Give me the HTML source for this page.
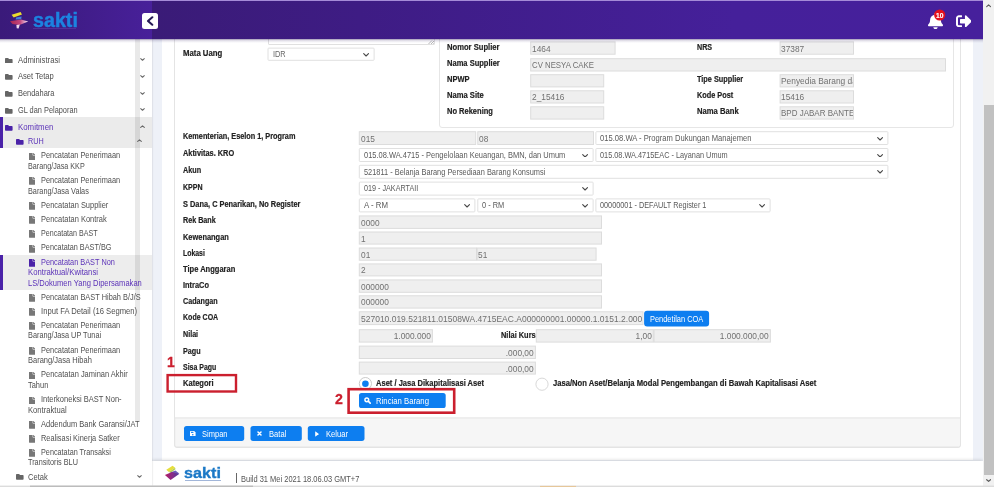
<!DOCTYPE html>
<html><head><meta charset="utf-8"><title>SAKTI</title>
<style>
html,body{margin:0;padding:0;}
body{width:994px;height:487px;overflow:hidden;position:relative;background:#fff;font-family:"Liberation Sans", sans-serif;}
.b{position:absolute;box-sizing:border-box;display:block;}
.t{position:absolute;white-space:nowrap;}
.inp{position:absolute;box-sizing:border-box;background:#efefef;border:1px solid #dedede;overflow:hidden;}
.sel{position:absolute;box-sizing:border-box;background:#fff;border:1px solid #e2e2e2;border-radius:1px;}
.clip{position:absolute;overflow:hidden;}
</style></head><body><div id="root" style="position:absolute;left:0;top:0;width:994px;height:487px;overflow:hidden;will-change:transform;">
<div class="b" style="left:152px;top:39px;width:831.00px;height:448.00px;background:#eef1f8;"></div>
<div class="b" style="left:162px;top:39px;width:811.00px;height:421.00px;background:#fff;"></div>
<div class="b" style="left:174.2px;top:30px;width:786.80px;height:417.50px;border:1px solid #e4e4e4;border-radius:0 0 3px 3px;background:#fff;"></div>
<svg class="b" style="left:170px;top:414px" width="796" height="38" viewBox="170 414 796 38"><path d="M174.700 417.900 H960.500 V445 Q960.500 447 958.500 447 H176.700 Q174.700 447 174.700 445 Z" fill="#f6f6f6" stroke="#e4e4e4" stroke-width="1"/></svg>
<div class="b" style="left:439px;top:30px;width:515.00px;height:97.50px;border:1px solid #e6e6e6;border-radius:0 0 3px 3px;background:#fff;"></div>
<svg class="b" style="left:0;top:0" width="994" height="487" viewBox="0 0 994 487"><rect x="268.00" y="48.10" width="106.10" height="12.20" rx="0.8" fill="#fff" stroke="#e0e0e0" stroke-width="1"/><rect x="530.70" y="41.90" width="84.40" height="12.30" rx="0" fill="#efefef" stroke="#dcdcdc" stroke-width="1"/><rect x="530.70" y="58.70" width="414.80" height="12.30" rx="0" fill="#efefef" stroke="#dcdcdc" stroke-width="1"/><rect x="530.70" y="74.70" width="73.00" height="12.20" rx="0" fill="#efefef" stroke="#dcdcdc" stroke-width="1"/><rect x="530.70" y="90.80" width="73.00" height="12.20" rx="0" fill="#efefef" stroke="#dcdcdc" stroke-width="1"/><rect x="530.70" y="106.80" width="73.00" height="12.30" rx="0" fill="#efefef" stroke="#dcdcdc" stroke-width="1"/><rect x="780.10" y="41.90" width="73.40" height="12.30" rx="0" fill="#efefef" stroke="#dcdcdc" stroke-width="1"/><rect x="780.10" y="74.70" width="73.40" height="12.20" rx="0" fill="#efefef" stroke="#dcdcdc" stroke-width="1"/><rect x="780.10" y="90.80" width="73.40" height="12.20" rx="0" fill="#efefef" stroke="#dcdcdc" stroke-width="1"/><rect x="780.10" y="106.80" width="73.40" height="12.30" rx="0" fill="#efefef" stroke="#dcdcdc" stroke-width="1"/><rect x="359.30" y="131.70" width="116.40" height="12.80" rx="0" fill="#efefef" stroke="#dcdcdc" stroke-width="1"/><rect x="477.80" y="131.70" width="115.70" height="12.80" rx="0" fill="#efefef" stroke="#dcdcdc" stroke-width="1"/><rect x="595.90" y="131.70" width="292.00" height="12.80" rx="0.8" fill="#fff" stroke="#e0e0e0" stroke-width="1"/><rect x="359.30" y="148.50" width="233.80" height="13.00" rx="0.8" fill="#fff" stroke="#e0e0e0" stroke-width="1"/><rect x="595.90" y="148.50" width="292.00" height="13.00" rx="0.8" fill="#fff" stroke="#e0e0e0" stroke-width="1"/><rect x="359.30" y="165.30" width="528.60" height="13.00" rx="0.8" fill="#fff" stroke="#e0e0e0" stroke-width="1"/><rect x="359.30" y="182.10" width="233.80" height="13.00" rx="0.8" fill="#fff" stroke="#e0e0e0" stroke-width="1"/><rect x="359.30" y="198.90" width="115.60" height="13.00" rx="0.8" fill="#fff" stroke="#e0e0e0" stroke-width="1"/><rect x="477.80" y="198.90" width="115.30" height="13.00" rx="0.8" fill="#fff" stroke="#e0e0e0" stroke-width="1"/><rect x="595.90" y="198.90" width="174.20" height="13.00" rx="0.8" fill="#fff" stroke="#e0e0e0" stroke-width="1"/><rect x="359.30" y="215.90" width="242.20" height="12.50" rx="0" fill="#efefef" stroke="#dcdcdc" stroke-width="1"/><rect x="359.30" y="232.00" width="242.20" height="12.10" rx="0" fill="#efefef" stroke="#dcdcdc" stroke-width="1"/><rect x="359.30" y="248.00" width="117.20" height="12.20" rx="0" fill="#efefef" stroke="#dcdcdc" stroke-width="1"/><rect x="477.10" y="248.00" width="119.00" height="12.20" rx="0" fill="#efefef" stroke="#dcdcdc" stroke-width="1"/><rect x="359.30" y="263.90" width="242.20" height="12.00" rx="0" fill="#efefef" stroke="#dcdcdc" stroke-width="1"/><rect x="359.30" y="279.90" width="242.20" height="12.40" rx="0" fill="#efefef" stroke="#dcdcdc" stroke-width="1"/><rect x="359.30" y="295.80" width="242.20" height="12.30" rx="0" fill="#efefef" stroke="#dcdcdc" stroke-width="1"/><rect x="359.30" y="311.80" width="283.70" height="12.80" rx="0" fill="#efefef" stroke="#dcdcdc" stroke-width="1"/><rect x="644.10" y="310.70" width="65.00" height="15.70" rx="3" fill="#0d7ef0"/><rect x="359.30" y="329.70" width="73.10" height="12.40" rx="0" fill="#efefef" stroke="#dcdcdc" stroke-width="1"/><rect x="536.30" y="329.70" width="117.00" height="12.40" rx="0" fill="#efefef" stroke="#dcdcdc" stroke-width="1"/><rect x="654.00" y="329.70" width="116.40" height="12.40" rx="0" fill="#efefef" stroke="#dcdcdc" stroke-width="1"/><rect x="359.30" y="346.10" width="176.10" height="12.40" rx="0" fill="#efefef" stroke="#dcdcdc" stroke-width="1"/><rect x="359.30" y="362.10" width="176.10" height="12.00" rx="0" fill="#efefef" stroke="#dcdcdc" stroke-width="1"/><rect x="359.00" y="393.10" width="86.70" height="14.90" rx="2.6" fill="#0d7ef0"/><rect x="184.00" y="426.00" width="60.20" height="14.90" rx="2.6" fill="#0d7ef0"/><rect x="250.50" y="426.00" width="51.30" height="14.90" rx="2.6" fill="#0d7ef0"/><rect x="307.80" y="426.00" width="56.70" height="14.90" rx="2.6" fill="#0d7ef0"/></svg>
<div class="b" style="left:267.5px;top:30px;width:167.20px;height:14.60px;border:1px solid #e0e0e0;background:#fff;border-radius:0 0 1px 1px;"></div>
<svg class="b" style="left:427.5px;top:39.5px" width="6.500" height="4.500" viewBox="0 0 6.500 4.500"><path d="M0.500 4 L4 0.500 M3 4 L6 1 M5.300 4 L6.200 3.100" stroke="#9a9a9a" stroke-width="0.700" fill="none"/></svg>
<div class="t" style="left:182.6px;transform-origin:0 50%;top:48.77px;font-size:8.2px;line-height:10.66px;font-weight:700;color:#222;transform:scaleX(0.9491);-webkit-text-stroke:0.18px #222;">Mata Uang</div>
<div class="t" style="left:272.7px;transform-origin:0 50%;top:49.87px;font-size:8.2px;line-height:10.66px;font-weight:400;color:#666;transform:scaleX(0.9);">IDR</div>
<svg class="b" style="left:362.90px;top:52.75px" width="6.2" height="3.91" viewBox="0 0 6.2 3.91"><path d="M0.7 0.7 L3.1 3.0100000000000002 L5.5 0.7" fill="none" stroke="#484848" stroke-width="1.12" stroke-linecap="round" stroke-linejoin="round"/></svg>
<div class="t" style="left:447px;transform-origin:0 50%;top:43.47px;font-size:8.2px;line-height:10.66px;font-weight:700;color:#222;transform:scaleX(0.9305);-webkit-text-stroke:0.18px #222;">Nomor Suplier</div>
<div class="t" style="left:447px;transform-origin:0 50%;top:59.47px;font-size:8.2px;line-height:10.66px;font-weight:700;color:#222;transform:scaleX(0.9208);-webkit-text-stroke:0.18px #222;">Nama Supplier</div>
<div class="t" style="left:447px;transform-origin:0 50%;top:75.47px;font-size:8.2px;line-height:10.66px;font-weight:700;color:#222;transform:scaleX(0.9201);-webkit-text-stroke:0.18px #222;">NPWP</div>
<div class="t" style="left:447px;transform-origin:0 50%;top:91.47px;font-size:8.2px;line-height:10.66px;font-weight:700;color:#222;transform:scaleX(0.9294);-webkit-text-stroke:0.18px #222;">Nama Site</div>
<div class="t" style="left:447px;transform-origin:0 50%;top:107.47px;font-size:8.2px;line-height:10.66px;font-weight:700;color:#222;transform:scaleX(0.9171);-webkit-text-stroke:0.18px #222;">No Rekening</div>
<div class="clip" style="left:531.2px;top:42.4px;width:83.40px;height:11.30px;"><div class="t" style="left:0.8px;transform-origin:0 50%;top:0.15px;font-size:9.3px;line-height:12px;color:#707070;transform:scaleX(0.895);">1464</div></div>
<div class="clip" style="left:531.2px;top:59.2px;width:413.80px;height:11.30px;"><div class="t" style="left:0.8px;transform-origin:0 50%;top:0.15px;font-size:9.3px;line-height:12px;color:#707070;transform:scaleX(0.84);">CV NESYA CAKE</div></div>
<div class="clip" style="left:531.2px;top:75.2px;width:72.00px;height:11.20px;"></div>
<div class="clip" style="left:531.2px;top:91.3px;width:72.00px;height:11.20px;"><div class="t" style="left:0.8px;transform-origin:0 50%;top:0.10px;font-size:9.3px;line-height:12px;color:#707070;transform:scaleX(0.895);">2_15416</div></div>
<div class="clip" style="left:531.2px;top:107.3px;width:72.00px;height:11.30px;"></div>
<div class="t" style="left:696.6px;transform-origin:0 50%;top:43.47px;font-size:8.2px;line-height:10.66px;font-weight:700;color:#222;transform:scaleX(0.873);-webkit-text-stroke:0.18px #222;">NRS</div>
<div class="t" style="left:696.6px;transform-origin:0 50%;top:75.47px;font-size:8.2px;line-height:10.66px;font-weight:700;color:#222;transform:scaleX(0.8933);-webkit-text-stroke:0.18px #222;">Tipe Supplier</div>
<div class="t" style="left:696.6px;transform-origin:0 50%;top:91.47px;font-size:8.2px;line-height:10.66px;font-weight:700;color:#222;transform:scaleX(0.8938);-webkit-text-stroke:0.18px #222;">Kode Post</div>
<div class="t" style="left:696.6px;transform-origin:0 50%;top:107.47px;font-size:8.2px;line-height:10.66px;font-weight:700;color:#222;transform:scaleX(0.9348);-webkit-text-stroke:0.18px #222;">Nama Bank</div>
<div class="clip" style="left:780.6px;top:42.4px;width:72.40px;height:11.30px;"><div class="t" style="left:0.8px;transform-origin:0 50%;top:0.15px;font-size:9.3px;line-height:12px;color:#707070;transform:scaleX(0.895);">37387</div></div>
<div class="clip" style="left:780.6px;top:75.2px;width:72.40px;height:11.20px;"><div class="t" style="left:0.8px;transform-origin:0 50%;top:0.10px;font-size:9.3px;line-height:12px;color:#707070;transform:scaleX(0.9);">Penyedia Barang dan Jasa</div></div>
<div class="clip" style="left:780.6px;top:91.3px;width:72.40px;height:11.20px;"><div class="t" style="left:0.8px;transform-origin:0 50%;top:0.10px;font-size:9.3px;line-height:12px;color:#707070;transform:scaleX(0.895);">15416</div></div>
<div class="clip" style="left:780.6px;top:107.3px;width:72.40px;height:11.30px;"><div class="t" style="left:0.8px;transform-origin:0 50%;top:0.15px;font-size:9.3px;line-height:12px;color:#707070;transform:scaleX(0.86);">BPD JABAR BANTEN</div></div>
<div class="t" style="left:182.6px;transform-origin:0 50%;top:131.97px;font-size:8.2px;line-height:10.66px;font-weight:700;color:#222;transform:scaleX(0.8917);-webkit-text-stroke:0.18px #222;">Kementerian, Eselon 1, Program</div>
<div class="t" style="left:182.6px;transform-origin:0 50%;top:149.07px;font-size:8.2px;line-height:10.66px;font-weight:700;color:#222;transform:scaleX(0.8985);-webkit-text-stroke:0.18px #222;">Aktivitas. KRO</div>
<div class="t" style="left:182.6px;transform-origin:0 50%;top:165.97px;font-size:8.2px;line-height:10.66px;font-weight:700;color:#222;transform:scaleX(0.8843);-webkit-text-stroke:0.18px #222;">Akun</div>
<div class="t" style="left:182.6px;transform-origin:0 50%;top:182.77px;font-size:8.2px;line-height:10.66px;font-weight:700;color:#222;transform:scaleX(0.8615);-webkit-text-stroke:0.18px #222;">KPPN</div>
<div class="t" style="left:182.6px;transform-origin:0 50%;top:200.37px;font-size:8.2px;line-height:10.66px;font-weight:700;color:#222;transform:scaleX(0.9021);-webkit-text-stroke:0.18px #222;">S Dana, C Penarikan, No Register</div>
<div class="t" style="left:182.6px;transform-origin:0 50%;top:216.27px;font-size:8.2px;line-height:10.66px;font-weight:700;color:#222;transform:scaleX(0.876);-webkit-text-stroke:0.18px #222;">Rek Bank</div>
<div class="t" style="left:182.6px;transform-origin:0 50%;top:232.77px;font-size:8.2px;line-height:10.66px;font-weight:700;color:#222;transform:scaleX(0.9067);-webkit-text-stroke:0.18px #222;">Kewenangan</div>
<div class="t" style="left:182.6px;transform-origin:0 50%;top:248.87px;font-size:8.2px;line-height:10.66px;font-weight:700;color:#222;transform:scaleX(0.8438);-webkit-text-stroke:0.18px #222;">Lokasi</div>
<div class="t" style="left:182.6px;transform-origin:0 50%;top:264.67px;font-size:8.2px;line-height:10.66px;font-weight:700;color:#222;transform:scaleX(0.9196);-webkit-text-stroke:0.18px #222;">Tipe Anggaran</div>
<div class="t" style="left:182.6px;transform-origin:0 50%;top:280.67px;font-size:8.2px;line-height:10.66px;font-weight:700;color:#222;transform:scaleX(0.9038);-webkit-text-stroke:0.18px #222;">IntraCo</div>
<div class="t" style="left:182.6px;transform-origin:0 50%;top:296.97px;font-size:8.2px;line-height:10.66px;font-weight:700;color:#222;transform:scaleX(0.8764);-webkit-text-stroke:0.18px #222;">Cadangan</div>
<div class="t" style="left:182.6px;transform-origin:0 50%;top:312.57px;font-size:8.2px;line-height:10.66px;font-weight:700;color:#222;transform:scaleX(0.8598);-webkit-text-stroke:0.18px #222;">Kode COA</div>
<div class="t" style="left:182.6px;transform-origin:0 50%;top:330.37px;font-size:8.2px;line-height:10.66px;font-weight:700;color:#222;transform:scaleX(0.873);-webkit-text-stroke:0.18px #222;">Nilai</div>
<div class="t" style="left:182.6px;transform-origin:0 50%;top:347.27px;font-size:8.2px;line-height:10.66px;font-weight:700;color:#222;transform:scaleX(0.8786);-webkit-text-stroke:0.18px #222;">Pagu</div>
<div class="t" style="left:182.6px;transform-origin:0 50%;top:363.07px;font-size:8.2px;line-height:10.66px;font-weight:700;color:#222;transform:scaleX(0.8508);-webkit-text-stroke:0.18px #222;">Sisa Pagu</div>
<div class="t" style="left:182.6px;transform-origin:0 50%;top:378.77px;font-size:8.2px;line-height:10.66px;font-weight:700;color:#222;transform:scaleX(0.9212);-webkit-text-stroke:0.18px #222;">Kategori</div>
<div class="clip" style="left:359.8px;top:132.2px;width:115.40px;height:11.80px;"><div class="t" style="left:0.8px;transform-origin:0 50%;top:0.40px;font-size:9.3px;line-height:12px;color:#707070;transform:scaleX(0.895);">015</div></div>
<div class="clip" style="left:478.3px;top:132.2px;width:114.70px;height:11.80px;"><div class="t" style="left:0.8px;transform-origin:0 50%;top:0.40px;font-size:9.3px;line-height:12px;color:#707070;transform:scaleX(0.895);">08</div></div>
<div class="t" style="left:600.4px;transform-origin:0 50%;top:133.87px;font-size:8.2px;line-height:10.66px;font-weight:400;color:#5a5a5a;transform:scaleX(0.929);">015.08.WA - Program Dukungan Manajemen</div>
<svg class="b" style="left:876.70px;top:136.64px" width="6.2" height="3.91" viewBox="0 0 6.2 3.91"><path d="M0.7 0.7 L3.1 3.0100000000000002 L5.5 0.7" fill="none" stroke="#484848" stroke-width="1.12" stroke-linecap="round" stroke-linejoin="round"/></svg>
<div class="t" style="left:363.8px;transform-origin:0 50%;top:150.77px;font-size:8.2px;line-height:10.66px;font-weight:400;color:#5a5a5a;transform:scaleX(0.9131);">015.08.WA.4715 - Pengelolaan Keuangan, BMN, dan Umum</div>
<svg class="b" style="left:581.90px;top:153.54px" width="6.2" height="3.91" viewBox="0 0 6.2 3.91"><path d="M0.7 0.7 L3.1 3.0100000000000002 L5.5 0.7" fill="none" stroke="#484848" stroke-width="1.12" stroke-linecap="round" stroke-linejoin="round"/></svg>
<div class="t" style="left:600.4px;transform-origin:0 50%;top:150.77px;font-size:8.2px;line-height:10.66px;font-weight:400;color:#5a5a5a;transform:scaleX(0.8955);">015.08.WA.4715EAC - Layanan Umum</div>
<svg class="b" style="left:876.70px;top:153.54px" width="6.2" height="3.91" viewBox="0 0 6.2 3.91"><path d="M0.7 0.7 L3.1 3.0100000000000002 L5.5 0.7" fill="none" stroke="#484848" stroke-width="1.12" stroke-linecap="round" stroke-linejoin="round"/></svg>
<div class="t" style="left:363.8px;transform-origin:0 50%;top:167.57px;font-size:8.2px;line-height:10.66px;font-weight:400;color:#5a5a5a;transform:scaleX(0.9039);">521811 - Belanja Barang Persediaan Barang Konsumsi</div>
<svg class="b" style="left:876.70px;top:170.34px" width="6.2" height="3.91" viewBox="0 0 6.2 3.91"><path d="M0.7 0.7 L3.1 3.0100000000000002 L5.5 0.7" fill="none" stroke="#484848" stroke-width="1.12" stroke-linecap="round" stroke-linejoin="round"/></svg>
<div class="t" style="left:363.8px;transform-origin:0 50%;top:184.37px;font-size:8.2px;line-height:10.66px;font-weight:400;color:#5a5a5a;transform:scaleX(0.88);">019 - JAKARTAII</div>
<svg class="b" style="left:581.90px;top:187.14px" width="6.2" height="3.91" viewBox="0 0 6.2 3.91"><path d="M0.7 0.7 L3.1 3.0100000000000002 L5.5 0.7" fill="none" stroke="#484848" stroke-width="1.12" stroke-linecap="round" stroke-linejoin="round"/></svg>
<div class="t" style="left:363.8px;transform-origin:0 50%;top:201.17px;font-size:8.2px;line-height:10.66px;font-weight:400;color:#5a5a5a;transform:scaleX(0.9588);">A - RM</div>
<svg class="b" style="left:463.70px;top:203.94px" width="6.2" height="3.91" viewBox="0 0 6.2 3.91"><path d="M0.7 0.7 L3.1 3.0100000000000002 L5.5 0.7" fill="none" stroke="#484848" stroke-width="1.12" stroke-linecap="round" stroke-linejoin="round"/></svg>
<div class="t" style="left:482.3px;transform-origin:0 50%;top:201.17px;font-size:8.2px;line-height:10.66px;font-weight:400;color:#5a5a5a;transform:scaleX(0.9038);">0 - RM</div>
<svg class="b" style="left:581.90px;top:203.94px" width="6.2" height="3.91" viewBox="0 0 6.2 3.91"><path d="M0.7 0.7 L3.1 3.0100000000000002 L5.5 0.7" fill="none" stroke="#484848" stroke-width="1.12" stroke-linecap="round" stroke-linejoin="round"/></svg>
<div class="t" style="left:600.4px;transform-origin:0 50%;top:201.17px;font-size:8.2px;line-height:10.66px;font-weight:400;color:#5a5a5a;transform:scaleX(0.8912);">00000001 - DEFAULT Register 1</div>
<svg class="b" style="left:758.90px;top:203.94px" width="6.2" height="3.91" viewBox="0 0 6.2 3.91"><path d="M0.7 0.7 L3.1 3.0100000000000002 L5.5 0.7" fill="none" stroke="#484848" stroke-width="1.12" stroke-linecap="round" stroke-linejoin="round"/></svg>
<div class="clip" style="left:359.8px;top:216.4px;width:241.20px;height:11.50px;"><div class="t" style="left:0.8px;transform-origin:0 50%;top:0.25px;font-size:9.3px;line-height:12px;color:#707070;transform:scaleX(0.895);">0000</div></div>
<div class="clip" style="left:359.8px;top:232.5px;width:241.20px;height:11.10px;"><div class="t" style="left:0.8px;transform-origin:0 50%;top:0.05px;font-size:9.3px;line-height:12px;color:#707070;transform:scaleX(0.895);">1</div></div>
<div class="clip" style="left:359.8px;top:248.5px;width:116.20px;height:11.20px;"><div class="t" style="left:0.8px;transform-origin:0 50%;top:0.10px;font-size:9.3px;line-height:12px;color:#707070;transform:scaleX(0.895);">01</div></div>
<div class="clip" style="left:477.6px;top:248.5px;width:118.00px;height:11.20px;"><div class="t" style="left:0.8px;transform-origin:0 50%;top:0.10px;font-size:9.3px;line-height:12px;color:#707070;transform:scaleX(0.895);">51</div></div>
<div class="clip" style="left:359.8px;top:264.4px;width:241.20px;height:11.00px;"><div class="t" style="left:0.8px;transform-origin:0 50%;top:0.00px;font-size:9.3px;line-height:12px;color:#707070;transform:scaleX(0.895);">2</div></div>
<div class="clip" style="left:359.8px;top:280.4px;width:241.20px;height:11.40px;"><div class="t" style="left:0.8px;transform-origin:0 50%;top:0.20px;font-size:9.3px;line-height:12px;color:#707070;transform:scaleX(0.895);">000000</div></div>
<div class="clip" style="left:359.8px;top:296.3px;width:241.20px;height:11.30px;"><div class="t" style="left:0.8px;transform-origin:0 50%;top:0.15px;font-size:9.3px;line-height:12px;color:#707070;transform:scaleX(0.895);">000000</div></div>
<div class="clip" style="left:359.8px;top:312.3px;width:282.7px;height:11.8px;"><div class="t" style="left:0.9px;top:1.10px;font-size:9.5px;line-height:12px;color:#707070;transform:scaleX(0.8935);transform-origin:0 50%;">527010.019.521811.01508WA.4715EAC.A000000001.00000.1.0151.2.000000</div></div>
<div class="t" style="left:649.9px;transform-origin:0 50%;top:313.50px;font-size:8.3px;line-height:10.79px;font-weight:400;color:#fff;transform:scaleX(0.8958);">Pendetilan COA</div>
<div class="clip" style="left:359.8px;top:330.2px;width:72.10px;height:11.40px;"><div class="t" style="right:0.8px;transform-origin:100% 50%;top:0.20px;font-size:9.2px;line-height:12px;color:#707070;transform:scaleX(0.91);">1.000.000</div></div>
<div class="t" style="left:500.5px;transform-origin:0 50%;top:330.67px;font-size:8.2px;line-height:10.66px;font-weight:700;color:#222;transform:scaleX(0.9076);-webkit-text-stroke:0.18px #222;">Nilai Kurs</div>
<div class="clip" style="left:536.8px;top:330.2px;width:116.00px;height:11.40px;"><div class="t" style="right:0.8px;transform-origin:100% 50%;top:0.20px;font-size:9.2px;line-height:12px;color:#707070;transform:scaleX(0.91);">1,00</div></div>
<div class="clip" style="left:654.5px;top:330.2px;width:115.40px;height:11.40px;"><div class="t" style="right:0.8px;transform-origin:100% 50%;top:0.20px;font-size:9.2px;line-height:12px;color:#707070;transform:scaleX(0.91);">1.000.000,00</div></div>
<div class="clip" style="left:359.8px;top:346.6px;width:175.10px;height:11.40px;"><div class="t" style="right:0.8px;transform-origin:100% 50%;top:0.20px;font-size:9.2px;line-height:12px;color:#707070;transform:scaleX(0.91);">.000,00</div></div>
<div class="clip" style="left:359.8px;top:362.6px;width:175.10px;height:11.00px;"><div class="t" style="right:0.8px;transform-origin:100% 50%;top:0.00px;font-size:9.2px;line-height:12px;color:#707070;transform:scaleX(0.91);">.000,00</div></div>
<svg class="b" style="left:355px;top:373px" width="20" height="20" viewBox="355 373 20 20"><circle cx="365.400" cy="383.600" r="6.100" fill="#fff" stroke="#c4c4c4" stroke-width="0.900"/><circle cx="365.400" cy="383.700" r="3.300" fill="#0d7ef0"/></svg>
<div class="t" style="left:376px;transform-origin:0 50%;top:378.87px;font-size:8.2px;line-height:10.66px;font-weight:700;color:#222;transform:scaleX(0.9221);-webkit-text-stroke:0.18px #222;">Aset / Jasa Dikapitalisasi Aset</div>
<svg class="b" style="left:532px;top:374px" width="20" height="20" viewBox="532 374 20 20"><circle cx="542" cy="384.200" r="6.100" fill="#fff" stroke="#d4d4d4" stroke-width="0.900"/></svg>
<div class="t" style="left:552.7px;transform-origin:0 50%;top:379.47px;font-size:8.2px;line-height:10.66px;font-weight:700;color:#222;transform:scaleX(0.9323);-webkit-text-stroke:0.18px #222;">Jasa/Non Aset/Belanja Modal Pengembangan di Bawah Kapitalisasi Aset</div>
<svg class="b" style="left:364px;top:397.4px" width="7" height="7" viewBox="0 0 12 12"><circle cx="4.800" cy="4.800" r="3.200" fill="none" stroke="#fff" stroke-width="2.500"/><path d="M7.600 7.600 L10.600 10.600" stroke="#fff" stroke-width="2.800" stroke-linecap="round"/></svg>
<div class="t" style="left:375.6px;transform-origin:0 50%;top:395.91px;font-size:8.3px;line-height:10.79px;font-weight:400;color:#fff;transform:scaleX(0.9342);">Rincian Barang</div>
<svg class="b" style="left:160px;top:370px" width="84" height="28" viewBox="160 370 84 28"><rect x="167.600" y="375.100" width="68.400" height="16.400" fill="none" stroke="#cb1f2e" stroke-width="2.400"/></svg>
<svg class="b" style="left:340px;top:384px" width="122" height="36" viewBox="340 384 122 36"><rect x="348.600" y="389.200" width="105.600" height="23.500" fill="none" stroke="#cb1f2e" stroke-width="2.600"/></svg>
<div class="t" style="left:166.6px;transform-origin:0 50%;top:353.41px;font-size:14.6px;line-height:18.98px;font-weight:700;color:#cb1f2e;transform:scaleX(0.95);-webkit-text-stroke:0.3px #cb1f2e;">1</div>
<div class="t" style="left:335.3px;transform-origin:0 50%;top:390.41px;font-size:14.6px;line-height:18.98px;font-weight:700;color:#cb1f2e;transform:scaleX(0.97);-webkit-text-stroke:0.3px #cb1f2e;">2</div>
<div class="t" style="left:202.1px;transform-origin:0 50%;top:429.31px;font-size:8.3px;line-height:10.79px;font-weight:400;color:#fff;transform:scaleX(0.9062);">Simpan</div>
<svg class="b" style="left:190.1px;top:430.8px" width="5.6" height="5.6" viewBox="0 0 10 10"><path fill="#fff" d="M1 0h6.500L10 2.500V9a1 1 0 0 1-1 1H1a1 1 0 0 1-1-1V1a1 1 0 0 1 1-1z"/><rect x="1.700" y="1.400" width="4.400" height="2" fill="#0d7ef0"/><circle cx="5" cy="6.700" r="1.400" fill="#0d7ef0"/></svg>
<div class="t" style="left:268.6px;transform-origin:0 50%;top:429.31px;font-size:8.3px;line-height:10.79px;font-weight:400;color:#fff;transform:scaleX(0.9143);">Batal</div>
<svg class="b" style="left:256.9px;top:431.1px" width="5" height="5" viewBox="0 0 10 10"><path d="M2 2 L8 8 M8 2 L2 8" stroke="#fff" stroke-width="3" stroke-linecap="round"/></svg>
<div class="t" style="left:325.90000000000003px;transform-origin:0 50%;top:429.31px;font-size:8.3px;line-height:10.79px;font-weight:400;color:#fff;transform:scaleX(0.9214);">Keluar</div>
<svg class="b" style="left:314.9px;top:430.6px" width="3.800" height="6" viewBox="0 0 7 10"><path d="M0.400 0.600 Q0.400 0 1 0.400 L6.600 4.600 Q7 5 6.600 5.400 L1 9.600 Q0.400 10 0.400 9.400z" fill="#fff"/></svg>
<div class="b" style="left:152px;top:460.5px;width:831.00px;height:26.50px;background:#fff;box-shadow:0 -1.500px 3.500px rgba(0,0,0,.17);"></div>
<svg class="b" style="left:164px;top:464px" width="17" height="18" viewBox="164 464 17 18">
<defs><linearGradient id="lg2" x1="0" x2="1" y1="0" y2="0"><stop offset="0" stop-color="#b31f63"/><stop offset=".5" stop-color="#8a2a86"/><stop offset="1" stop-color="#4c3a9c"/></linearGradient></defs>
<path d="M166.300 469.700 L172.600 465.700 L175.100 467.700 L168.800 472.100z" fill="#e6de3c"/>
<path d="M168.800 472.100 L175.100 467.700 L175.500 469.300 L170.600 472.700z" fill="#b4cf52"/>
<path d="M170.200 472.600 L175.400 470.600 L179.300 473.600 L175.500 475z" fill="#6b5bb9"/>
<path d="M164.900 475.100 L172 471.900 L179.100 473.900 L170.600 479.900z" fill="url(#lg2)"/>
</svg>
<div class="t" style="left:184.3px;transform-origin:0 50%;top:462.82px;font-size:15.2px;line-height:19.76px;font-weight:700;color:#1b78c6;transform:scaleX(1.0657);-webkit-text-stroke:0.35px #1b78c6;">sakti</div>
<div class="b" style="left:184.7px;top:480px;width:36.30px;height:0.90px;background:rgba(70,110,180,.5);"></div>
<div class="b" style="left:235.9px;top:473.3px;width:0.80px;height:9.70px;background:#666;"></div>
<div class="t" style="left:241px;transform-origin:0 50%;top:473.91px;font-size:8.6px;line-height:11.18px;font-weight:400;color:#555;transform:scaleX(0.8704);">Build 31 Mei 2021 18.06.03 GMT+7</div>
<div class="b" style="left:0px;top:39px;width:151.60px;height:448.00px;background:#fff;box-shadow:0.500px 0 1.500px rgba(0,0,0,.16);"></div>
<div class="b" style="left:0px;top:117.4px;width:151.60px;height:30.60px;background:#ebebeb;"></div>
<div class="b" style="left:0px;top:117.4px;width:2.60px;height:30.60px;background:#4a22a8;"></div>
<div class="b" style="left:0px;top:254.6px;width:151.60px;height:35.00px;background:#ededed;"></div>
<div class="b" style="left:0px;top:254.6px;width:2.60px;height:35.00px;background:#4a22a8;"></div>
<div class="b" style="left:135.2px;top:39px;width:4.60px;height:382.00px;background:rgba(0,0,0,.085);"></div>
<svg class="b" style="left:5.4px;top:57.54px" width="7.6" height="5.93" viewBox="0 0 512 400"><path fill="#666" d="M464 72H272l-64-64H48C21.5 8 0 29.5 0 56v288c0 26.5 21.5 48 48 48h416c26.500 0 48-21.500 48-48V120c0-26.500-21.500-48-48-48z"/></svg>
<div class="t" style="left:17.8px;transform-origin:0 50%;top:55.87px;font-size:8.2px;line-height:10.66px;font-weight:400;color:#4f4f4f;transform:scaleX(0.9418);">Administrasi</div>
<svg class="b" style="left:140.20px;top:58.23px" width="5.0" height="3.15" viewBox="0 0 5.0 3.15"><path d="M0.7 0.7 L2.5 2.25 L4.3 0.7" fill="none" stroke="#666" stroke-width="1.08" stroke-linecap="round" stroke-linejoin="round"/></svg>
<svg class="b" style="left:5.4px;top:74.14px" width="7.6" height="5.93" viewBox="0 0 512 400"><path fill="#666" d="M464 72H272l-64-64H48C21.5 8 0 29.5 0 56v288c0 26.5 21.5 48 48 48h416c26.500 0 48-21.500 48-48V120c0-26.500-21.500-48-48-48z"/></svg>
<div class="t" style="left:17.8px;transform-origin:0 50%;top:72.47px;font-size:8.2px;line-height:10.66px;font-weight:400;color:#4f4f4f;transform:scaleX(0.9287);">Aset Tetap</div>
<svg class="b" style="left:140.20px;top:74.82px" width="5.0" height="3.15" viewBox="0 0 5.0 3.15"><path d="M0.7 0.7 L2.5 2.25 L4.3 0.7" fill="none" stroke="#666" stroke-width="1.08" stroke-linecap="round" stroke-linejoin="round"/></svg>
<svg class="b" style="left:5.4px;top:90.84px" width="7.6" height="5.93" viewBox="0 0 512 400"><path fill="#666" d="M464 72H272l-64-64H48C21.5 8 0 29.5 0 56v288c0 26.5 21.5 48 48 48h416c26.500 0 48-21.500 48-48V120c0-26.500-21.500-48-48-48z"/></svg>
<div class="t" style="left:17.8px;transform-origin:0 50%;top:89.17px;font-size:8.2px;line-height:10.66px;font-weight:400;color:#4f4f4f;transform:scaleX(0.9086);">Bendahara</div>
<svg class="b" style="left:140.20px;top:91.52px" width="5.0" height="3.15" viewBox="0 0 5.0 3.15"><path d="M0.7 0.7 L2.5 2.25 L4.3 0.7" fill="none" stroke="#666" stroke-width="1.08" stroke-linecap="round" stroke-linejoin="round"/></svg>
<svg class="b" style="left:5.4px;top:107.64px" width="7.6" height="5.93" viewBox="0 0 512 400"><path fill="#666" d="M464 72H272l-64-64H48C21.5 8 0 29.5 0 56v288c0 26.5 21.5 48 48 48h416c26.500 0 48-21.500 48-48V120c0-26.500-21.500-48-48-48z"/></svg>
<div class="t" style="left:17.8px;transform-origin:0 50%;top:105.97px;font-size:8.2px;line-height:10.66px;font-weight:400;color:#4f4f4f;transform:scaleX(0.9009);">GL dan Pelaporan</div>
<svg class="b" style="left:140.20px;top:108.32px" width="5.0" height="3.15" viewBox="0 0 5.0 3.15"><path d="M0.7 0.7 L2.5 2.25 L4.3 0.7" fill="none" stroke="#666" stroke-width="1.08" stroke-linecap="round" stroke-linejoin="round"/></svg>
<svg class="b" style="left:5.4px;top:124.84px" width="7.6" height="5.93" viewBox="0 0 512 400"><path fill="#4a22a8" d="M464 72H272l-64-64H48C21.5 8 0 29.5 0 56v288c0 26.5 21.5 48 48 48h416c26.500 0 48-21.500 48-48V120c0-26.500-21.500-48-48-48z"/></svg>
<div class="t" style="left:17.8px;transform-origin:0 50%;top:123.07px;font-size:8.2px;line-height:10.66px;font-weight:400;color:#5b32b8;transform:scaleX(0.9604);">Komitmen</div>
<svg class="b" style="left:140.20px;top:125.12px" width="5.0" height="3.15" viewBox="0 0 5.0 3.15"><path d="M0.7 2.45 L2.5 0.9 L4.3 2.45" fill="none" stroke="#666" stroke-width="1.08" stroke-linecap="round" stroke-linejoin="round"/></svg>
<svg class="b" style="left:16.4px;top:138.74px" width="7.6" height="5.93" viewBox="0 0 512 400"><path fill="#4a22a8" d="M464 72H272l-64-64H48C21.5 8 0 29.5 0 56v288c0 26.5 21.5 48 48 48h416c26.500 0 48-21.500 48-48V120c0-26.500-21.500-48-48-48z"/></svg>
<div class="t" style="left:28.3px;transform-origin:0 50%;top:137.07px;font-size:8.2px;line-height:10.66px;font-weight:400;color:#5b32b8;transform:scaleX(0.8845);">RUH</div>
<svg class="b" style="left:136.80px;top:139.33px" width="5.0" height="3.15" viewBox="0 0 5.0 3.15"><path d="M0.7 2.45 L2.5 0.9 L4.3 2.45" fill="none" stroke="#666" stroke-width="1.08" stroke-linecap="round" stroke-linejoin="round"/></svg>
<svg class="b" style="left:28.9px;top:152.65px" width="6.2" height="7.70" viewBox="0 0 384 512" preserveAspectRatio="none"><path fill="#777" d="M224 136V0H24C10.700 0 0 10.700 0 24v464c0 13.300 10.700 24 24 24h336c13.300 0 24-10.700 24-24V160H248c-13.200 0-24-10.800-24-24zm160-14.100v6.100H256V0h6.100c6.400 0 12.500 2.500 17 7l97.900 98c4.500 4.500 7 10.600 7 16.900z"/></svg>
<div class="t" style="left:40.8px;transform-origin:0 50%;top:151.27px;font-size:8.2px;line-height:10.66px;font-weight:400;color:#4f4f4f;transform:scaleX(0.9014);">Pencatatan Penerimaan</div>
<div class="t" style="left:27.6px;transform-origin:0 50%;top:161.72px;font-size:8.2px;line-height:10.66px;font-weight:400;color:#4f4f4f;transform:scaleX(0.8772);">Barang/Jasa KKP</div>
<svg class="b" style="left:28.9px;top:177.45px" width="6.2" height="7.70" viewBox="0 0 384 512" preserveAspectRatio="none"><path fill="#777" d="M224 136V0H24C10.700 0 0 10.700 0 24v464c0 13.300 10.700 24 24 24h336c13.300 0 24-10.700 24-24V160H248c-13.200 0-24-10.800-24-24zm160-14.100v6.100H256V0h6.100c6.400 0 12.500 2.500 17 7l97.900 98c4.500 4.500 7 10.600 7 16.900z"/></svg>
<div class="t" style="left:40.8px;transform-origin:0 50%;top:176.07px;font-size:8.2px;line-height:10.66px;font-weight:400;color:#4f4f4f;transform:scaleX(0.9014);">Pencatatan Penerimaan</div>
<div class="t" style="left:27.6px;transform-origin:0 50%;top:186.52px;font-size:8.2px;line-height:10.66px;font-weight:400;color:#4f4f4f;transform:scaleX(0.8925);">Barang/Jasa Valas</div>
<svg class="b" style="left:28.9px;top:201.95px" width="6.2" height="7.70" viewBox="0 0 384 512" preserveAspectRatio="none"><path fill="#777" d="M224 136V0H24C10.700 0 0 10.700 0 24v464c0 13.300 10.700 24 24 24h336c13.300 0 24-10.700 24-24V160H248c-13.200 0-24-10.800-24-24zm160-14.100v6.100H256V0h6.100c6.400 0 12.500 2.500 17 7l97.900 98c4.500 4.500 7 10.600 7 16.900z"/></svg>
<div class="t" style="left:40.8px;transform-origin:0 50%;top:200.57px;font-size:8.2px;line-height:10.66px;font-weight:400;color:#4f4f4f;transform:scaleX(0.9125);">Pencatatan Supplier</div>
<svg class="b" style="left:28.9px;top:216.25px" width="6.2" height="7.70" viewBox="0 0 384 512" preserveAspectRatio="none"><path fill="#777" d="M224 136V0H24C10.700 0 0 10.700 0 24v464c0 13.300 10.700 24 24 24h336c13.300 0 24-10.700 24-24V160H248c-13.200 0-24-10.800-24-24zm160-14.100v6.100H256V0h6.100c6.400 0 12.500 2.500 17 7l97.900 98c4.500 4.500 7 10.600 7 16.900z"/></svg>
<div class="t" style="left:40.8px;transform-origin:0 50%;top:214.87px;font-size:8.2px;line-height:10.66px;font-weight:400;color:#4f4f4f;transform:scaleX(0.9135);">Pencatatan Kontrak</div>
<svg class="b" style="left:28.9px;top:230.45px" width="6.2" height="7.70" viewBox="0 0 384 512" preserveAspectRatio="none"><path fill="#777" d="M224 136V0H24C10.700 0 0 10.700 0 24v464c0 13.300 10.700 24 24 24h336c13.300 0 24-10.700 24-24V160H248c-13.200 0-24-10.800-24-24zm160-14.100v6.100H256V0h6.100c6.400 0 12.500 2.500 17 7l97.900 98c4.500 4.500 7 10.600 7 16.900z"/></svg>
<div class="t" style="left:40.8px;transform-origin:0 50%;top:229.07px;font-size:8.2px;line-height:10.66px;font-weight:400;color:#4f4f4f;transform:scaleX(0.8695);">Pencatatan BAST</div>
<svg class="b" style="left:28.9px;top:244.85px" width="6.2" height="7.70" viewBox="0 0 384 512" preserveAspectRatio="none"><path fill="#777" d="M224 136V0H24C10.700 0 0 10.700 0 24v464c0 13.300 10.700 24 24 24h336c13.300 0 24-10.700 24-24V160H248c-13.200 0-24-10.800-24-24zm160-14.100v6.100H256V0h6.100c6.400 0 12.500 2.500 17 7l97.900 98c4.500 4.500 7 10.600 7 16.900z"/></svg>
<div class="t" style="left:40.8px;transform-origin:0 50%;top:243.47px;font-size:8.2px;line-height:10.66px;font-weight:400;color:#4f4f4f;transform:scaleX(0.8889);">Pencatatan BAST/BG</div>
<svg class="b" style="left:28.9px;top:259.15px" width="6.2" height="7.70" viewBox="0 0 384 512" preserveAspectRatio="none"><path fill="#4a22a8" d="M224 136V0H24C10.700 0 0 10.700 0 24v464c0 13.300 10.700 24 24 24h336c13.300 0 24-10.700 24-24V160H248c-13.200 0-24-10.800-24-24zm160-14.100v6.100H256V0h6.100c6.400 0 12.500 2.500 17 7l97.900 98c4.500 4.500 7 10.600 7 16.900z"/></svg>
<div class="t" style="left:40.8px;transform-origin:0 50%;top:257.77px;font-size:8.2px;line-height:10.66px;font-weight:400;color:#5b32b8;transform:scaleX(0.8987);">Pencatatan BAST Non</div>
<div class="t" style="left:27.6px;transform-origin:0 50%;top:268.22px;font-size:8.2px;line-height:10.66px;font-weight:400;color:#5b32b8;transform:scaleX(0.9436);">Kontraktual/Kwitansi</div>
<div class="t" style="left:27.6px;transform-origin:0 50%;top:278.67px;font-size:8.2px;line-height:10.66px;font-weight:400;color:#5b32b8;transform:scaleX(0.925);">LS/Dokumen Yang Dipersamakan</div>
<svg class="b" style="left:28.9px;top:293.95px" width="6.2" height="7.70" viewBox="0 0 384 512" preserveAspectRatio="none"><path fill="#777" d="M224 136V0H24C10.700 0 0 10.700 0 24v464c0 13.300 10.700 24 24 24h336c13.300 0 24-10.700 24-24V160H248c-13.200 0-24-10.800-24-24zm160-14.100v6.100H256V0h6.100c6.400 0 12.500 2.500 17 7l97.900 98c4.500 4.500 7 10.600 7 16.900z"/></svg>
<div class="t" style="left:40.8px;transform-origin:0 50%;top:292.57px;font-size:8.2px;line-height:10.66px;font-weight:400;color:#4f4f4f;transform:scaleX(0.9026);">Pencatatan BAST Hibah B/J/S</div>
<svg class="b" style="left:28.9px;top:308.35px" width="6.2" height="7.70" viewBox="0 0 384 512" preserveAspectRatio="none"><path fill="#777" d="M224 136V0H24C10.700 0 0 10.700 0 24v464c0 13.300 10.700 24 24 24h336c13.300 0 24-10.700 24-24V160H248c-13.200 0-24-10.800-24-24zm160-14.100v6.100H256V0h6.100c6.400 0 12.500 2.500 17 7l97.900 98c4.500 4.500 7 10.600 7 16.900z"/></svg>
<div class="t" style="left:40.8px;transform-origin:0 50%;top:306.97px;font-size:8.2px;line-height:10.66px;font-weight:400;color:#4f4f4f;transform:scaleX(0.9343);">Input FA Detail (16 Segmen)</div>
<svg class="b" style="left:28.9px;top:322.05px" width="6.2" height="7.70" viewBox="0 0 384 512" preserveAspectRatio="none"><path fill="#777" d="M224 136V0H24C10.700 0 0 10.700 0 24v464c0 13.300 10.700 24 24 24h336c13.300 0 24-10.700 24-24V160H248c-13.200 0-24-10.800-24-24zm160-14.100v6.100H256V0h6.100c6.400 0 12.500 2.500 17 7l97.900 98c4.500 4.500 7 10.600 7 16.900z"/></svg>
<div class="t" style="left:40.8px;transform-origin:0 50%;top:320.67px;font-size:8.2px;line-height:10.66px;font-weight:400;color:#4f4f4f;transform:scaleX(0.9014);">Pencatatan Penerimaan</div>
<div class="t" style="left:27.6px;transform-origin:0 50%;top:331.12px;font-size:8.2px;line-height:10.66px;font-weight:400;color:#4f4f4f;transform:scaleX(0.8938);">Barang/Jasa UP Tunai</div>
<svg class="b" style="left:28.9px;top:347.35px" width="6.2" height="7.70" viewBox="0 0 384 512" preserveAspectRatio="none"><path fill="#777" d="M224 136V0H24C10.700 0 0 10.700 0 24v464c0 13.300 10.700 24 24 24h336c13.300 0 24-10.700 24-24V160H248c-13.200 0-24-10.800-24-24zm160-14.100v6.100H256V0h6.100c6.400 0 12.500 2.500 17 7l97.900 98c4.500 4.500 7 10.600 7 16.900z"/></svg>
<div class="t" style="left:40.8px;transform-origin:0 50%;top:345.97px;font-size:8.2px;line-height:10.66px;font-weight:400;color:#4f4f4f;transform:scaleX(0.9014);">Pencatatan Penerimaan</div>
<div class="t" style="left:27.6px;transform-origin:0 50%;top:356.42px;font-size:8.2px;line-height:10.66px;font-weight:400;color:#4f4f4f;transform:scaleX(0.9176);">Barang/Jasa Hibah</div>
<svg class="b" style="left:28.9px;top:371.75px" width="6.2" height="7.70" viewBox="0 0 384 512" preserveAspectRatio="none"><path fill="#777" d="M224 136V0H24C10.700 0 0 10.700 0 24v464c0 13.300 10.700 24 24 24h336c13.300 0 24-10.700 24-24V160H248c-13.200 0-24-10.800-24-24zm160-14.100v6.100H256V0h6.100c6.400 0 12.500 2.500 17 7l97.900 98c4.500 4.500 7 10.600 7 16.900z"/></svg>
<div class="t" style="left:40.8px;transform-origin:0 50%;top:370.37px;font-size:8.2px;line-height:10.66px;font-weight:400;color:#4f4f4f;transform:scaleX(0.9125);">Pencatatan Jaminan Akhir</div>
<div class="t" style="left:27.6px;transform-origin:0 50%;top:380.82px;font-size:8.2px;line-height:10.66px;font-weight:400;color:#4f4f4f;transform:scaleX(0.9098);">Tahun</div>
<svg class="b" style="left:28.9px;top:396.75px" width="6.2" height="7.70" viewBox="0 0 384 512" preserveAspectRatio="none"><path fill="#777" d="M224 136V0H24C10.700 0 0 10.700 0 24v464c0 13.300 10.700 24 24 24h336c13.300 0 24-10.700 24-24V160H248c-13.200 0-24-10.800-24-24zm160-14.100v6.100H256V0h6.100c6.400 0 12.500 2.500 17 7l97.900 98c4.500 4.500 7 10.600 7 16.900z"/></svg>
<div class="t" style="left:40.8px;transform-origin:0 50%;top:395.37px;font-size:8.2px;line-height:10.66px;font-weight:400;color:#4f4f4f;transform:scaleX(0.9192);">Interkoneksi BAST Non-</div>
<div class="t" style="left:27.6px;transform-origin:0 50%;top:405.82px;font-size:8.2px;line-height:10.66px;font-weight:400;color:#4f4f4f;transform:scaleX(0.9319);">Kontraktual</div>
<svg class="b" style="left:28.9px;top:421.05px" width="6.2" height="7.70" viewBox="0 0 384 512" preserveAspectRatio="none"><path fill="#777" d="M224 136V0H24C10.700 0 0 10.700 0 24v464c0 13.300 10.700 24 24 24h336c13.300 0 24-10.700 24-24V160H248c-13.200 0-24-10.800-24-24zm160-14.100v6.100H256V0h6.100c6.400 0 12.500 2.500 17 7l97.900 98c4.500 4.500 7 10.600 7 16.900z"/></svg>
<div class="t" style="left:40.8px;transform-origin:0 50%;top:419.67px;font-size:8.2px;line-height:10.66px;font-weight:400;color:#4f4f4f;transform:scaleX(0.9144);">Addendum Bank Garansi/JAT</div>
<svg class="b" style="left:28.9px;top:435.35px" width="6.2" height="7.70" viewBox="0 0 384 512" preserveAspectRatio="none"><path fill="#777" d="M224 136V0H24C10.700 0 0 10.700 0 24v464c0 13.300 10.700 24 24 24h336c13.300 0 24-10.700 24-24V160H248c-13.200 0-24-10.800-24-24zm160-14.100v6.100H256V0h6.100c6.400 0 12.500 2.500 17 7l97.900 98c4.500 4.500 7 10.600 7 16.900z"/></svg>
<div class="t" style="left:40.8px;transform-origin:0 50%;top:433.97px;font-size:8.2px;line-height:10.66px;font-weight:400;color:#4f4f4f;transform:scaleX(0.9043);">Realisasi Kinerja Satker</div>
<svg class="b" style="left:28.9px;top:449.35px" width="6.2" height="7.70" viewBox="0 0 384 512" preserveAspectRatio="none"><path fill="#777" d="M224 136V0H24C10.700 0 0 10.700 0 24v464c0 13.300 10.700 24 24 24h336c13.300 0 24-10.700 24-24V160H248c-13.200 0-24-10.800-24-24zm160-14.100v6.100H256V0h6.100c6.400 0 12.500 2.500 17 7l97.900 98c4.500 4.500 7 10.600 7 16.900z"/></svg>
<div class="t" style="left:40.8px;transform-origin:0 50%;top:447.97px;font-size:8.2px;line-height:10.66px;font-weight:400;color:#4f4f4f;transform:scaleX(0.8863);">Pencatatan Transaksi</div>
<div class="t" style="left:27.6px;transform-origin:0 50%;top:458.42px;font-size:8.2px;line-height:10.66px;font-weight:400;color:#4f4f4f;transform:scaleX(0.8891);">Transitoris BLU</div>
<svg class="b" style="left:16.4px;top:474.34px" width="7.6" height="5.93" viewBox="0 0 512 400"><path fill="#666" d="M464 72H272l-64-64H48C21.5 8 0 29.5 0 56v288c0 26.5 21.5 48 48 48h416c26.500 0 48-21.500 48-48V120c0-26.500-21.500-48-48-48z"/></svg>
<div class="t" style="left:28.3px;transform-origin:0 50%;top:472.67px;font-size:8.2px;line-height:10.66px;font-weight:400;color:#4f4f4f;transform:scaleX(0.9256);">Cetak</div>
<svg class="b" style="left:136.80px;top:475.23px" width="5.0" height="3.15" viewBox="0 0 5.0 3.15"><path d="M0.7 0.7 L2.5 2.25 L4.3 0.7" fill="none" stroke="#666" stroke-width="1.08" stroke-linecap="round" stroke-linejoin="round"/></svg>
<div class="b" style="left:0px;top:0px;width:152.40px;height:39.00px;background:linear-gradient(90deg,#3a1a7a 0%,#3f1c86 45%,#48209a 100%);"></div>
<div class="b" style="left:152.4px;top:0px;width:830.60px;height:39.00px;background:linear-gradient(90deg,#3a1b77 0%,#3e1c84 25%,#45209a 70%,#46209c 100%);"></div>
<div class="b" style="left:0px;top:39px;width:983.00px;height:4.00px;background:linear-gradient(180deg,rgba(40,20,90,.45),rgba(40,20,90,.12) 40%,rgba(40,20,90,0));"></div>
<div class="b" style="left:0px;top:0px;width:983.00px;height:1.00px;background:#a58bd8;"></div>
<div class="b" style="left:141.9px;top:13.3px;width:15.90px;height:15.50px;background:#fff;border-radius:2.5px;"></div>
<svg class="b" style="left:145.6px;top:16.4px" width="8" height="10" viewBox="0 0 8 10"><path d="M6.300 1.300 L2 5 L6.300 8.700" fill="none" stroke="#251a55" stroke-width="2.100" stroke-linecap="round" stroke-linejoin="round"/></svg>
<svg class="b" style="left:9px;top:10px" width="20" height="20" viewBox="9 10 20 20">
<defs><linearGradient id="lg1" x1="0" x2="1" y1="0" y2="0"><stop offset="0" stop-color="#a8284e"/><stop offset=".55" stop-color="#c2457f"/><stop offset="1" stop-color="#f3e6f6"/></linearGradient></defs>
<path d="M11.600 14.800 L20.600 12 L22 14.600 L13.600 17.400z" fill="#e9dc2e"/>
<path d="M16.200 17.400 L21.600 16.600 L21.200 19.200 L15.600 19.600z" fill="#3f86dd"/>
<path d="M10 21.200 L21 19.500 L28.200 21.400 L19.500 25 L12.500 24z" fill="url(#lg1)"/>
<path d="M16.400 25 L19.800 24.500 L18.600 28.600 L16.700 28.200z" fill="#f0d9ec"/>
</svg>
<div class="t" style="left:32.8px;transform-origin:0 50%;top:7.89px;font-size:19.4px;line-height:25.22px;font-weight:700;color:#1c83e0;transform:scaleX(1.015);-webkit-text-stroke:0.45px #1c83e0;">sakti</div>
<div class="b" style="left:33.2px;top:28.3px;width:42.60px;height:0.90px;background:rgba(120,90,200,.32);"></div>
<svg class="b" style="left:927.6px;top:12.9px" width="15" height="16.200" viewBox="0 0 448 512" preserveAspectRatio="none"><path fill="#fff" d="M224 512c35.300 0 64-28.700 64-64H160c0 35.300 28.700 64 64 64zm215.400-149.700c-19.300-20.800-55.500-52-55.500-154.300 0-77.700-54.500-139.900-127.900-155.200V32c0-17.700-14.300-32-32-32s-32 14.300-32 32v20.800C118.600 68.100 64.100 130.300 64.100 208c0 102.300-36.200 133.500-55.500 154.300-6 6.400-8.700 14.100-8.600 21.700.1 16.400 13 32 32.100 32h383.800c19.100 0 32-15.600 32.100-32 .1-7.600-2.600-15.300-8.600-21.700z"/></svg>
<svg class="b" style="left:932px;top:7px" width="16" height="16" viewBox="932 7 16 16"><circle cx="939.700" cy="15" r="5.600" fill="#e3101e"/></svg>
<div class="t" style="left:936px;transform-origin:0 50%;top:11.12px;font-size:7.2px;line-height:9.36px;font-weight:700;color:#fff;transform:scaleX(0.92);-webkit-text-stroke:0.18px #fff;">10</div>
<svg class="b" style="left:955.6px;top:14.900px" width="15.900" height="12.500" viewBox="0 0 512 400" preserveAspectRatio="none"><path fill="#fff" d="M497 217L329 385c-15 15-41 4.500-41-17v-96H152c-13.300 0-24-10.700-24-24v-96c0-13.300 10.700-24 24-24h136V32c0-21.400 25.900-32 41-17l168 168c9.300 9.400 9.300 24.600 0 34zM192 380v-40c0-6.600-5.400-12-12-12H96c-17.700 0-32-14.300-32-32V104c0-17.700 14.300-32 32-32h84c6.600 0 12-5.400 12-12V20c0-6.600-5.400-12-12-12H96C43 8 0 51 0 104v192c0 53 43 96 96 96h84c6.600 0 12-5.400 12-12z"/></svg>
<div class="b" style="left:983px;top:0px;width:11.00px;height:487.00px;background:#f1f1f1;"></div>
<div class="b" style="left:984.4px;top:105px;width:9.60px;height:370.00px;background:#c1c1c1;"></div>
<svg class="b" style="left:986.20px;top:4.46px" width="5.2" height="3.28" viewBox="0 0 5.2 3.28"><path d="M0.7 2.58 L2.6 0.9 L4.5 2.58" fill="none" stroke="#5a5a5a" stroke-width="1.15" stroke-linecap="round" stroke-linejoin="round"/></svg>
<svg class="b" style="left:986.20px;top:479.36px" width="5.2" height="3.28" viewBox="0 0 5.2 3.28"><path d="M0.7 0.7 L2.6 2.38 L4.5 0.7" fill="none" stroke="#5a5a5a" stroke-width="1.15" stroke-linecap="round" stroke-linejoin="round"/></svg>
<svg class="b" style="left:0;top:484px" width="994" height="3" viewBox="0 484 994 3"><rect x="0" y="485.600" width="994" height="1.400" fill="#dcdcdc"/><rect x="30" y="485.600" width="223" height="1.400" fill="#bcbcbc"/><rect x="540" y="485.900" width="36" height="1.100" fill="#e6c79a"/></svg>
</div></body></html>
